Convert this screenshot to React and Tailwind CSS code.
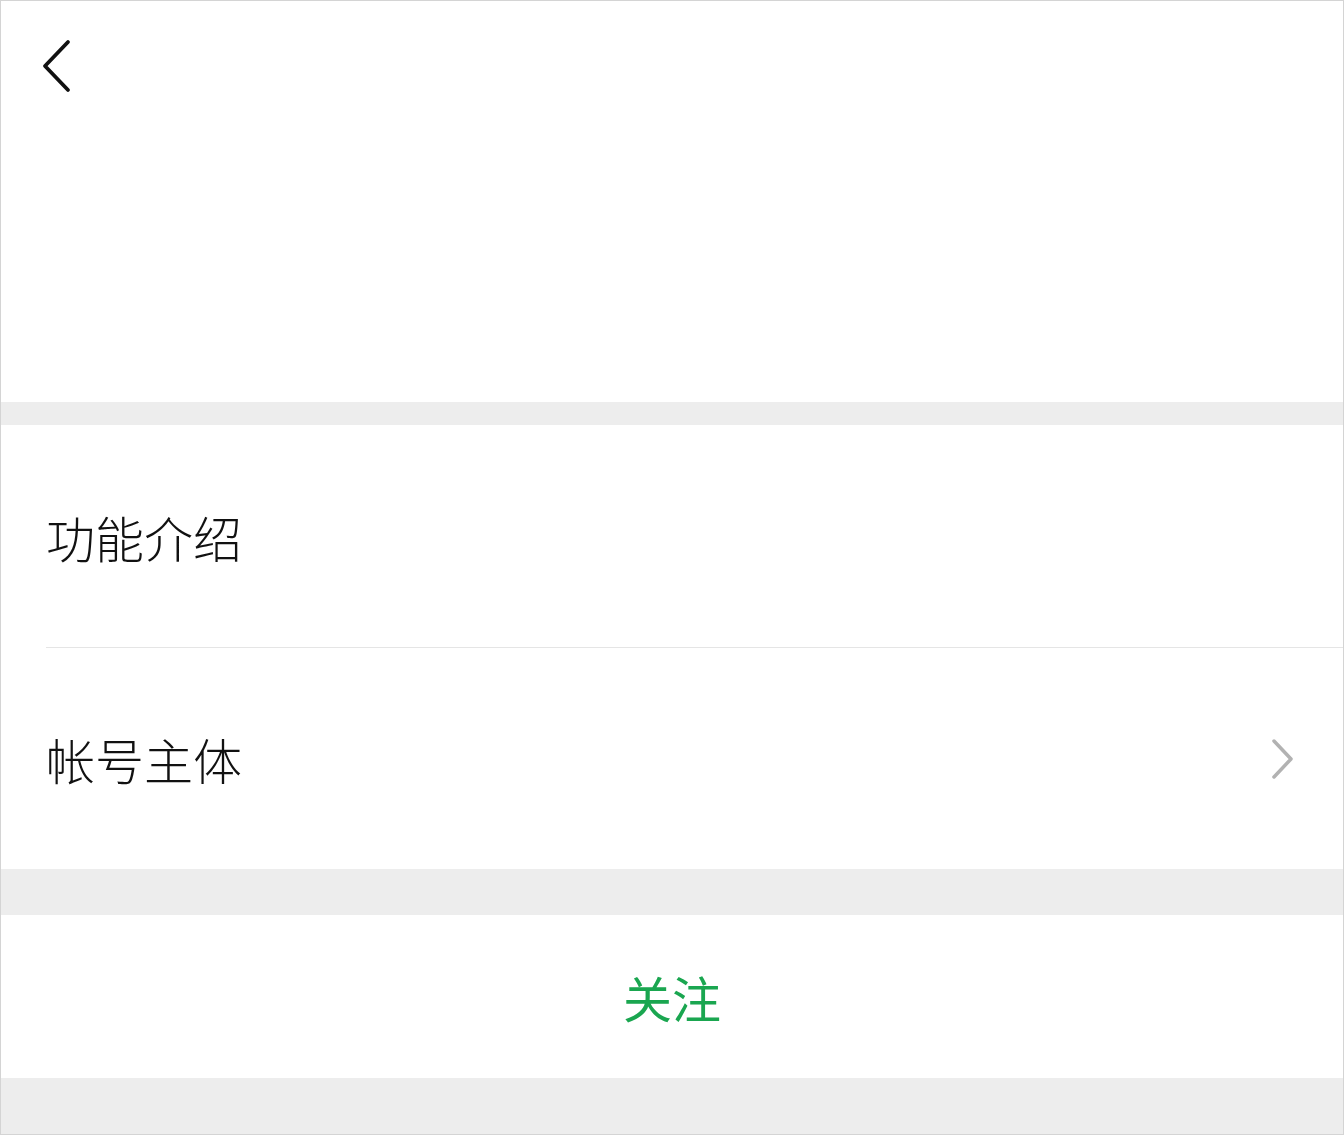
import React from "react";

const BackIcon = () => (
  <svg width="32" height="54" viewBox="0 0 32 54" fill="none">
    <path d="M27 3 L4 27 L27 51" stroke="#111" strokeWidth="3.8" strokeLinecap="round" strokeLinejoin="round" />
  </svg>
);

const ChevronRight = () => (
  <svg width="24" height="42" viewBox="0 0 24 42" fill="none">
    <path d="M3 3 L20 21 L3 39" stroke="#b2b2b2" strokeWidth="3.5" strokeLinecap="round" strokeLinejoin="round" />
  </svg>
);

const App = () => {
  return (
    <div
      className="w-full h-[1135px] border border-[#d4d4d4] bg-[#ededed] flex flex-col overflow-hidden"
      style={{ fontFamily: '"Noto Sans CJK SC", "Noto Sans", sans-serif' }}
    >
      {/* header */}
      <div className="h-[401px] bg-white pl-[40px] pt-[38px]">
        <BackIcon />
      </div>

      <div className="h-[23px] shrink-0" />

      {/* info rows */}
      <div className="bg-white">
        <div className="h-[222px] flex items-center pl-[45px]">
          <span className="text-[49px] leading-none font-light text-[#111]">功能介绍</span>
        </div>
        <div className="ml-[45px] h-px bg-[#e5e5e5]" />
        <div className="h-[221px] flex items-center justify-between pl-[45px] pr-[48px]">
          <span className="text-[49px] leading-none font-light text-[#111]">帐号主体</span>
          <ChevronRight />
        </div>
      </div>

      <div className="h-[46px] shrink-0" />

      {/* follow */}
      <div className="h-[163px] bg-white flex items-center justify-center">
        <span className="text-[49px] leading-none text-[#1aa650]">关注</span>
      </div>
    </div>
  );
};

export default App;
